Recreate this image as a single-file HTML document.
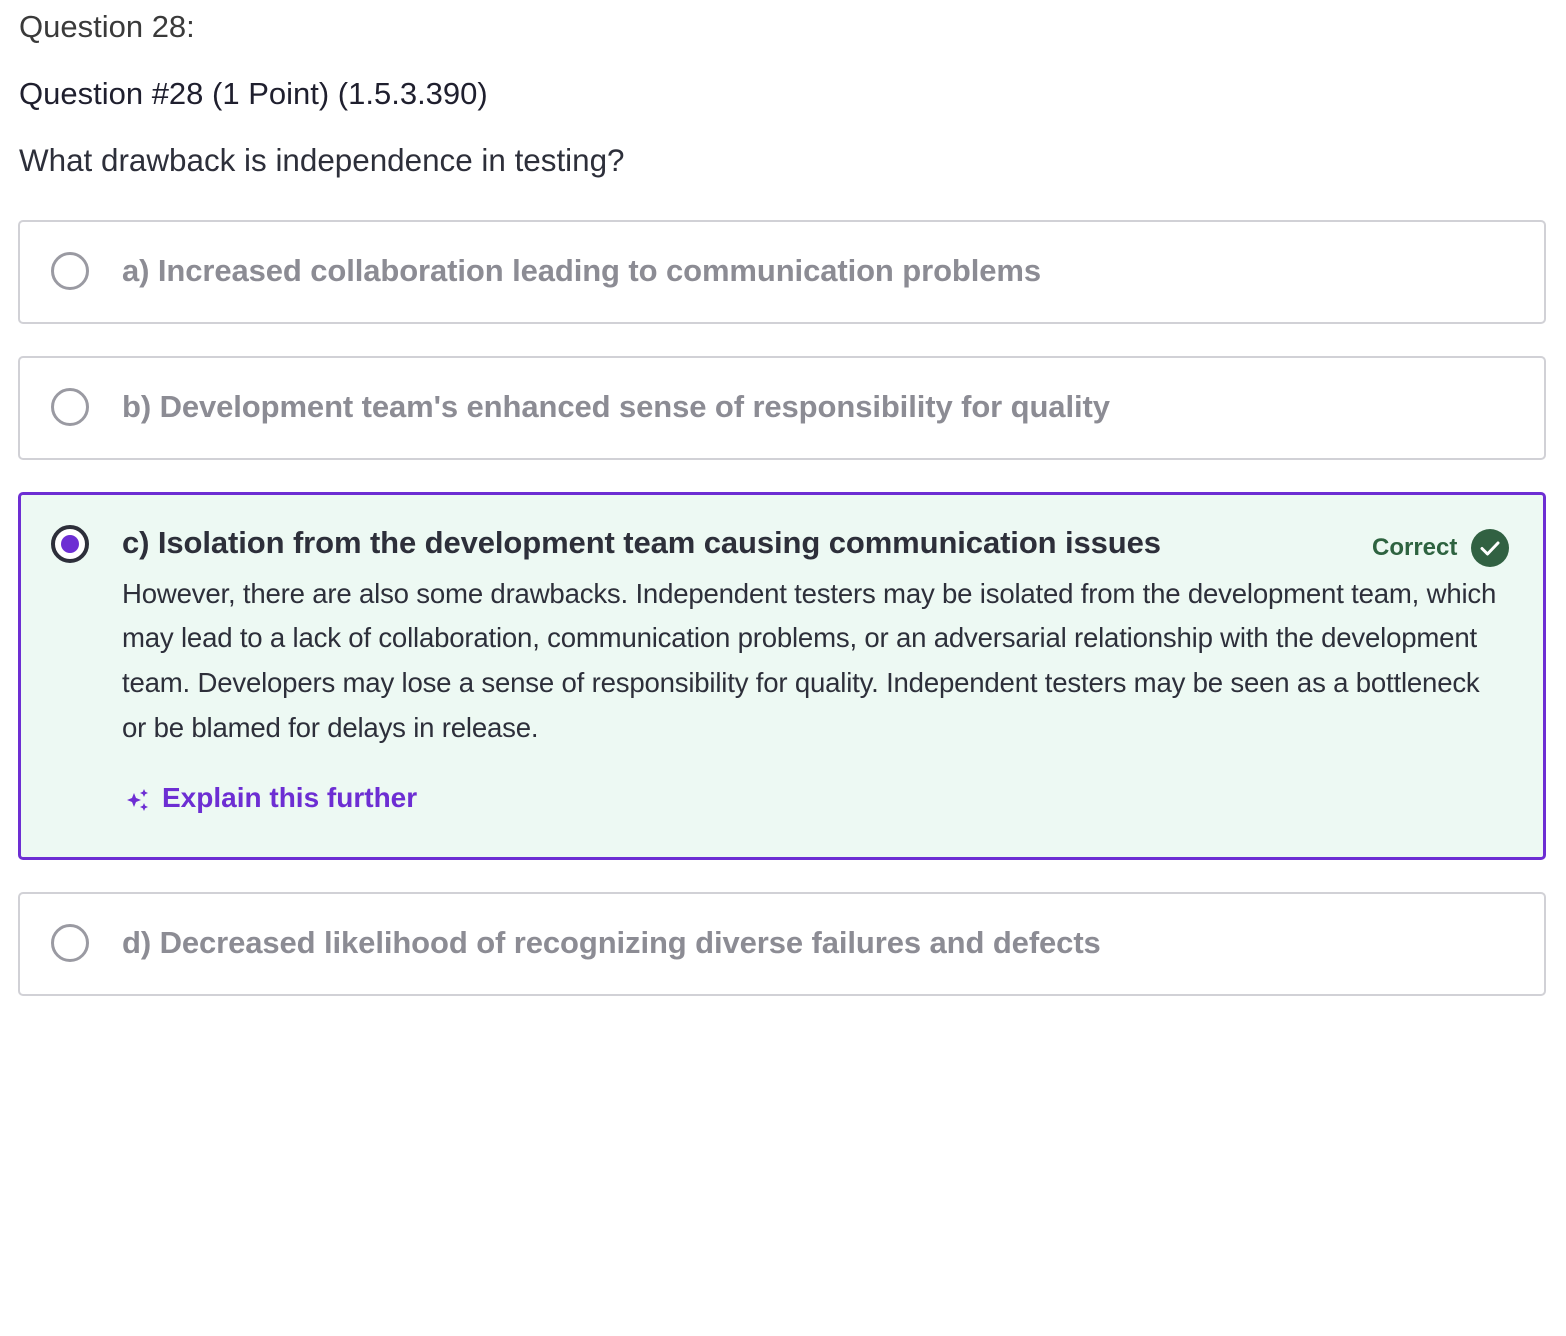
<!DOCTYPE html>
<html><head><meta charset="utf-8"><style>
body{margin:0;width:1566px;height:1336px;background:#fff;font-family:"Liberation Sans",sans-serif;color:#2d2f3a;position:relative;overflow:hidden}
.t{position:absolute;white-space:nowrap}
.card{position:absolute;left:18px;width:1528px;border:2px solid #d1d1d6;border-radius:5px;box-sizing:border-box}
.radio{position:absolute;left:51px;width:38px;height:38px;border:3px solid #9a9aa2;border-radius:50%;box-sizing:border-box}
.opt{position:absolute;left:122px;font-size:31px;font-weight:bold;color:#8c8c94;white-space:nowrap;letter-spacing:-0.1px}
.body{position:absolute;left:122px;font-size:27.6px;color:#2d2f3a;white-space:nowrap;letter-spacing:-0.2px}
</style></head><body>
<div class="t" style="left:19px;top:9px;font-size:31px;color:#3a3a3a">Question 28:</div>
<div class="t" style="left:19px;top:76px;font-size:31px;color:#1f1f2e">Question #28 (1 Point) (1.5.3.390)</div>
<div class="t" style="left:19px;top:143px;font-size:31.4px;color:#2d2f3a">What drawback is independence in testing?</div>

<div class="card" style="top:220px;height:104px"></div>
<div class="radio" style="top:252px"></div>
<div class="opt" style="top:253px">a) Increased collaboration leading to communication problems</div>

<div class="card" style="top:356px;height:104px"></div>
<div class="radio" style="top:388px"></div>
<div class="opt" style="top:389px">b) Development team's enhanced sense of responsibility for quality</div>

<div class="card" style="top:492px;height:368px;border:3px solid #6d2ed3;background:#edf9f3"></div>
<div class="radio" style="top:525px;border:4px solid #2d2f3a;background:#fff"><div style="position:absolute;left:6px;top:6px;width:18px;height:18px;border-radius:50%;background:#6d2ed3"></div></div>
<div class="opt" style="top:525px;color:#2d2f3a">c) Isolation from the development team causing communication issues</div>
<div class="t" style="left:1372px;top:534px;font-size:24px;font-weight:bold;color:#2e6340">Correct</div>
<div style="position:absolute;left:1471px;top:529px;width:38px;height:38px;border-radius:50%;background:#316142"><svg width="38" height="38" viewBox="0 0 38 38"><path d="M11 19.5l5.5 5.5 10.5-11" fill="none" stroke="#fff" stroke-width="3" stroke-linecap="round" stroke-linejoin="round"/></svg></div>
<div class="body" style="top:578px">However, there are also some drawbacks. Independent testers may be isolated from the development team, which</div>
<div class="body" style="top:622px">may lead to a lack of collaboration, communication problems, or an adversarial relationship with the development</div>
<div class="body" style="top:667px">team. Developers may lose a sense of responsibility for quality. Independent testers may be seen as a bottleneck</div>
<div class="body" style="top:712px">or be blamed for delays in release.</div>
<svg style="position:absolute;left:126px;top:788px" width="24" height="24" viewBox="0 0 24 24"><path d="M8 5l2 5 5 2-5 2-2 5-2-5-5-2 5-2z" fill="#6d2ed3"/><path d="M18 1l1.2 2.8L22 5l-2.8 1.2L18 9l-1.2-2.8L14 5l2.8-1.2z" fill="#6d2ed3"/><path d="M18 15l1.2 2.8L22 19l-2.8 1.2L18 23l-1.2-2.8L14 19l2.8-1.2z" fill="#6d2ed3"/></svg>
<div class="t" style="left:162px;top:782px;font-size:28px;font-weight:bold;color:#6d2ed3">Explain this further</div>

<div class="card" style="top:892px;height:104px"></div>
<div class="radio" style="top:924px"></div>
<div class="opt" style="top:925px">d) Decreased likelihood of recognizing diverse failures and defects</div>
</body></html>
